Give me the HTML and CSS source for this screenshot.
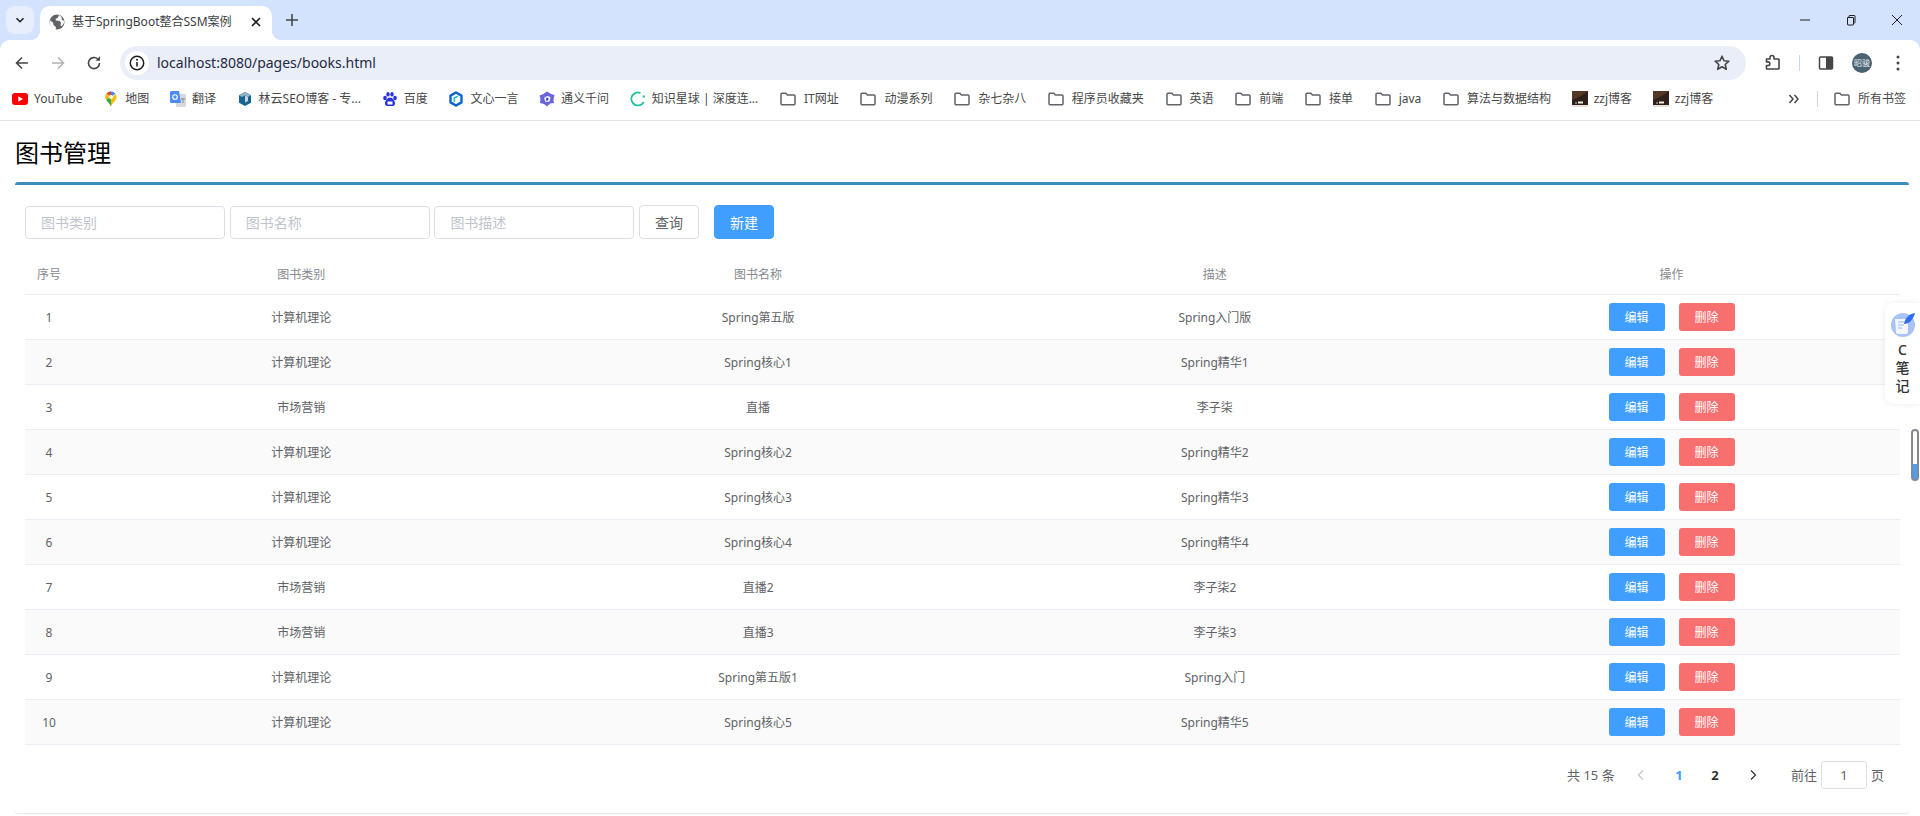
FILE: index.html
```html
<!DOCTYPE html>
<html lang="zh-CN">
<head>
<meta charset="utf-8">
<title>基于SpringBoot整合SSM案例</title>
<link rel="stylesheet" href="styles.css">
</head>
<body>
<svg class="defs" width="0" height="0">
  <symbol id="folder" viewBox="0 0 16 16"><path d="M1 3.200c0-.6.400-1 1-1h3.800l1.700 1.800H14c.6 0 1 .4 1 1v7.800c0 .6-.4 1-1 1H2c-.6 0-1-.4-1-1z" fill="none" stroke="#5f6368" stroke-width="1.500"/></symbol>
  <symbol id="zzj" viewBox="0 0 16 16"><rect width="16" height="16" fill="#2e201a"/><path d="M0 0h16L9 5 0 9z" fill="#553725"/><rect y="14" width="16" height="2" fill="#e8e2da"/><rect x="6" y="10.500" width="5" height="2" fill="#f2ede6"/><rect x="3" y="11.500" width="2" height="1" fill="#cfc8be"/></symbol>
</svg>

<header class="browser">
  <div class="tabstrip">
    <button class="tab-search"><svg width="12" height="12" viewBox="0 0 12 12"><path d="M2.500 4.200 6 7.700l3.500-3.500" fill="none" stroke="#1f1f1f" stroke-width="1.600"/></svg></button>
    <div class="tab">
      <svg width="16" height="16" viewBox="0 0 16 16"><circle cx="8" cy="8" r="7.500" fill="#5f6368"/><path d="M7 15.500 6.800 13 4.500 11 4 8.500 1 6.500 .6 8.500A7.500 7.500 0 0 0 7 15.500zM10 1l-1 2.500L6.500 5 7 6.500l3.500.5 1.500 1.500-.5 3 1 .8A7.500 7.500 0 0 0 15.400 7L13 6l-.5-3z" fill="#fff"/></svg>
      <span class="tab-title">基于SpringBoot整合SSM案例</span>
      <svg class="tab-close" width="12" height="12" viewBox="0 0 12 12"><path d="M2 2l8 8M10 2l-8 8" stroke="#1f1f1f" stroke-width="1.600"/></svg>
    </div>
    <svg class="new-tab" width="14" height="14" viewBox="0 0 14 14"><path d="M7 1v12M1 7h12" stroke="#444746" stroke-width="1.600"/></svg>
    <div class="win-ctrls">
      <svg width="12" height="12" viewBox="0 0 12 12"><path d="M1 6h10" stroke="#1f1f1f"/></svg>
      <svg width="12" height="12" viewBox="0 0 12 12"><path d="M2.500 3.500h5.500a.5.5 0 0 1 .5.5v6.500a.5.5 0 0 1-.5.5H3a.5.5 0 0 1-.5-.5zM4 3.500V2a.5.5 0 0 1 .5-.5H9.500A.5.5 0 0 1 10 2v6.500a.5.5 0 0 1-.5.5h-1" fill="none" stroke="#1f1f1f"/></svg>
      <svg width="12" height="12" viewBox="0 0 12 12"><path d="M1 1l10 10M11 1 1 11" stroke="#1f1f1f"/></svg>
    </div>
  </div>
  <div class="toolbar">
    <div class="nav-btns">
      <svg width="16" height="16" viewBox="0 0 16 16"><path d="M14 8H3M8 2.500 2.500 8 8 13.500" fill="none" stroke="#444746" stroke-width="1.600"/></svg>
      <svg width="16" height="16" viewBox="0 0 16 16"><path d="M2 8h11M8 2.500 13.500 8 8 13.500" fill="none" stroke="#b1b3b5" stroke-width="1.600"/></svg>
      <svg width="16" height="16" viewBox="0 0 16 16"><path d="M13.500 8A5.500 5.500 0 1 1 11.700 4" fill="none" stroke="#444746" stroke-width="1.600"/><path d="M9.500 5.800H14V1.300z" fill="#444746"/></svg>
    </div>
    <div class="omnibox">
      <span class="site-info"><svg width="16" height="16" viewBox="0 0 16 16"><circle cx="8" cy="8" r="6.700" fill="none" stroke="#1f1f1f" stroke-width="1.500"/><path d="M8 7v4.500" stroke="#1f1f1f" stroke-width="1.600"/><circle cx="8" cy="4.800" r="1" fill="#1f1f1f"/></svg></span>
      <span class="url">localhost:8080/pages/books.html</span>
      <svg class="star" width="18" height="18" viewBox="0 0 18 18"><path d="M9 2.200l2 4.500 4.900.5-3.700 3.300 1.100 4.800L9 12.800l-4.300 2.500 1.100-4.800L2.100 7.200 7 6.700z" fill="none" stroke="#444746" stroke-width="1.600" stroke-linejoin="round"/></svg>
    </div>
    <div class="tool-icons">
      <svg class="ic-ext" width="18" height="18" viewBox="0 0 18 18"><path d="M2.500 5h3.500V3.500a2 2 0 0 1 4 0V5h4.500a.5.5 0 0 1 .5.5v9a.5.5 0 0 1-.5.5H2.500v-3.500h1.500a1.800 1.800 0 0 0 0-3.600H2.500z" fill="none" stroke="#444746" stroke-width="1.600" stroke-linejoin="round"/></svg>
      <span class="sep"></span>
      <svg class="ic-side" width="16" height="16" viewBox="0 0 16 16"><rect x="1.500" y="2" width="13" height="12" rx="1" fill="none" stroke="#444746" stroke-width="1.500"/><rect x="8" y="2" width="6.500" height="12" fill="#444746"/></svg>
      <span class="avatar">昭骏</span>
      <svg class="ic-menu" width="4" height="16" viewBox="0 0 4 16"><circle cx="2" cy="2" r="1.500" fill="#444746"/><circle cx="2" cy="8" r="1.500" fill="#444746"/><circle cx="2" cy="14" r="1.500" fill="#444746"/></svg>
    </div>
  </div>
  <nav class="bookmarks">
    <a class="bm"><svg width="16" height="16" viewBox="0 0 16 16"><rect y="2" width="16" height="12" rx="3" fill="#f00"/><path d="M6.300 5.300 11 8l-4.700 2.700z" fill="#fff"/></svg>YouTube</a>
    <a class="bm"><svg width="16" height="16" viewBox="0 0 16 16"><path d="M8 .5a5.500 5.500 0 0 0-5.500 5.500c0 3.700 3.800 5.500 5.500 9.500z" fill="#34a853"/><path d="M8 .5a5.500 5.500 0 0 0-4.300 2L8 6z" fill="#ea4335"/><path d="M3.700 2.500A5.500 5.500 0 0 0 2.500 6c0 1 .3 1.900.7 2.700L8 6z" fill="#fbbc04"/><path d="M8 .5a5.500 5.500 0 0 1 4.400 2.200L8 6z" fill="#4285f4"/><path d="M12.400 2.700A5.500 5.500 0 0 1 13.500 6c0 3.700-3.800 5.500-5.500 9.500V8.500z" fill="#fbbc04"/><circle cx="8" cy="6" r="2" fill="#fff"/></svg>地图</a>
    <a class="bm"><svg width="16" height="16" viewBox="0 0 16 16"><rect x="6" y="3" width="10" height="13" rx="1" fill="#d6d8db"/><path d="M1.500 0H9l2 12H1.500A1.500 1.500 0 0 1 0 10.500v-9A1.500 1.500 0 0 1 1.500 0z" fill="#4c8bf5"/><circle cx="5" cy="6" r="2.300" fill="none" stroke="#fff" stroke-width="1.100"/><path d="M11 8h4M13 7v5" stroke="#8a8d91"/></svg>翻译</a>
    <a class="bm"><svg width="16" height="16" viewBox="0 0 16 16"><path d="M8 1l6 3.200v7.600L8 15l-6-3.200V4.200z" fill="#17648f"/><path d="M8 1l6 3.200-3 1.700-3-1.600-3 1.600-3-1.700z" fill="#8fb6c9"/><path d="M8 4.300l3 1.600v4l-3 1.700z" fill="#c7d3da"/></svg>林云SEO博客 - 专...</a>
    <a class="bm"><svg width="16" height="16" viewBox="0 0 16 16"><g fill="#2932e1"><ellipse cx="3" cy="7" rx="1.800" ry="2.200"/><ellipse cx="6" cy="3.200" rx="1.700" ry="2.200"/><ellipse cx="10" cy="3.200" rx="1.700" ry="2.200"/><ellipse cx="13" cy="7" rx="1.800" ry="2.200"/><path d="M8 6.500c2.500 0 5 3.500 5 6 0 2-1.500 2.500-3 2.500H6c-1.500 0-3-.5-3-2.500 0-2.500 2.500-6 5-6z"/></g><rect x="5.500" y="10.500" width="5" height="3" fill="#fff"/></svg>百度</a>
    <a class="bm"><svg width="16" height="16" viewBox="0 0 16 16"><path d="M8 1.500l5.500 3.100v6.800L8 14.500l-5.500-3.100V4.600z" fill="none" stroke="#0a62d0" stroke-width="2.400" stroke-linejoin="round"/><path d="M6.300 11V6.800L10 5.300" fill="none" stroke="#23c3ce" stroke-width="1.600"/></svg>文心一言</a>
    <a class="bm"><svg width="16" height="16" viewBox="0 0 16 16"><path d="M8 .5 12 3l3.500 1-1 4.500L15 12l-4 .5L8 15.500 5 13l-4-1 .5-4L.5 4.500 4.500 3z" fill="#6a64dd"/><path d="M8 5l3.500 1-1 4.500-4 .5-1.500-4z" fill="#fff"/><path d="M7.500 6.500 9.500 7 9 9.500 7 9.800z" fill="#3c35a6"/></svg>通义千问</a>
    <a class="bm"><svg width="16" height="16" viewBox="0 0 16 16"><path d="M13.700 10.800A6.500 6.500 0 1 1 10.500 2" fill="none" stroke="#21c2a0" stroke-width="1.800"/><circle cx="13.800" cy="5.400" r="1.200" fill="#21c2a0"/></svg>知识星球 | 深度连...</a>
    <a class="bm bm-folder"><svg width="16" height="16"><use href="#folder"/></svg>IT网址</a>
    <a class="bm bm-folder"><svg width="16" height="16"><use href="#folder"/></svg>动漫系列</a>
    <a class="bm bm-folder"><svg width="16" height="16"><use href="#folder"/></svg>杂七杂八</a>
    <a class="bm bm-folder"><svg width="16" height="16"><use href="#folder"/></svg>程序员收藏夹</a>
    <a class="bm bm-folder"><svg width="16" height="16"><use href="#folder"/></svg>英语</a>
    <a class="bm bm-folder"><svg width="16" height="16"><use href="#folder"/></svg>前端</a>
    <a class="bm bm-folder"><svg width="16" height="16"><use href="#folder"/></svg>接单</a>
    <a class="bm bm-folder"><svg width="16" height="16"><use href="#folder"/></svg>java</a>
    <a class="bm bm-folder"><svg width="16" height="16"><use href="#folder"/></svg>算法与数据结构</a>
    <a class="bm"><svg width="16" height="16"><use href="#zzj"/></svg>zzj博客</a>
    <a class="bm"><svg width="16" height="16"><use href="#zzj"/></svg>zzj博客</a>
    <div class="bm-end">
      <svg width="12" height="12" viewBox="0 0 12 12"><path d="M1.500 2 5 6l-3.500 4M6.500 2 10 6l-3.500 4" fill="none" stroke="#444746" stroke-width="1.500"/></svg>
      <span class="sep"></span>
      <a class="bm bm-last"><svg width="16" height="16"><use href="#folder"/></svg>所有书签</a>
    </div>
  </nav>
</header>

<main class="page">
  <h1 class="page-title">图书管理</h1>
  <section class="box">
    <div class="filters">
      <input class="field" placeholder="图书类别">
      <input class="field" placeholder="图书名称">
      <input class="field" placeholder="图书描述">
      <button class="btn">查询</button>
      <button class="btn btn-primary">新建</button>
    </div>
    <table class="grid">
      <thead>
        <tr><th class="col-no">序号</th><th>图书类别</th><th>图书名称</th><th>描述</th><th>操作</th></tr>
      </thead>
      <tbody>
        <tr><td>1</td><td>计算机理论</td><td>Spring第五版</td><td>Spring入门版</td><td><button class="mini edit">编辑</button><button class="mini del">删除</button></td></tr>
        <tr><td>2</td><td>计算机理论</td><td>Spring核心1</td><td>Spring精华1</td><td><button class="mini edit">编辑</button><button class="mini del">删除</button></td></tr>
        <tr><td>3</td><td>市场营销</td><td>直播</td><td>李子柒</td><td><button class="mini edit">编辑</button><button class="mini del">删除</button></td></tr>
        <tr><td>4</td><td>计算机理论</td><td>Spring核心2</td><td>Spring精华2</td><td><button class="mini edit">编辑</button><button class="mini del">删除</button></td></tr>
        <tr><td>5</td><td>计算机理论</td><td>Spring核心3</td><td>Spring精华3</td><td><button class="mini edit">编辑</button><button class="mini del">删除</button></td></tr>
        <tr><td>6</td><td>计算机理论</td><td>Spring核心4</td><td>Spring精华4</td><td><button class="mini edit">编辑</button><button class="mini del">删除</button></td></tr>
        <tr><td>7</td><td>市场营销</td><td>直播2</td><td>李子柒2</td><td><button class="mini edit">编辑</button><button class="mini del">删除</button></td></tr>
        <tr><td>8</td><td>市场营销</td><td>直播3</td><td>李子柒3</td><td><button class="mini edit">编辑</button><button class="mini del">删除</button></td></tr>
        <tr><td>9</td><td>计算机理论</td><td>Spring第五版1</td><td>Spring入门</td><td><button class="mini edit">编辑</button><button class="mini del">删除</button></td></tr>
        <tr><td>10</td><td>计算机理论</td><td>Spring核心5</td><td>Spring精华5</td><td><button class="mini edit">编辑</button><button class="mini del">删除</button></td></tr>
      </tbody>
    </table>
    <div class="pager">
      <span class="total">共 15 条</span>
      <svg class="arrow" width="12" height="12" viewBox="0 0 12 12"><path d="M8 1.500 3.500 6 8 10.500" fill="none" stroke="#c0c4cc" stroke-width="1.200"/></svg>
      <span class="pg pg-active">1</span>
      <span class="pg">2</span>
      <svg class="arrow" width="12" height="12" viewBox="0 0 12 12"><path d="M4 1.500 8.500 6 4 10.500" fill="none" stroke="#303133" stroke-width="1.200"/></svg>
      <span class="jump">前往<input class="jump-input" value="1">页</span>
    </div>
  </section>
</main>

<aside class="note-widget">
  <svg width="26" height="26" viewBox="0 0 26 26"><circle cx="13" cy="13" r="12" fill="#a9c2f7"/><path d="M5 7h13v13a2 2 0 0 1-2 2H8a2 2 0 0 1-2-2z" fill="#f3f6ff"/><path d="M8 10h6M8 13h6M8 16h4" stroke="#9db6ec"/><path d="M25 1c-6 1-10 5-11 11 5 0 9-4 11-11z" fill="#2f6df2"/></svg>
  <span class="note-text">C<br>笔<br>记</span>
</aside>
<div class="mini-scroll"><span class="mini-thumb"></span></div>
</body>
</html>
```

FILE: styles.css
```css
* { box-sizing: border-box; }
html, body { margin: 0; height: 816px; overflow: hidden; background: #fff; }
body { font-family: "Noto Sans", "Noto Sans CJK SC", sans-serif; font-size: 12px; color: #444; position: relative; }
.defs { position: absolute; }
svg { display: block; flex: none; }

/* browser chrome */
.browser { background: #d3e3fd; }
.tabstrip { height: 40px; display: flex; align-items: flex-start; padding: 6px 0 0 6px; }
.tab-search { width: 28px; height: 28px; border: 0; border-radius: 9px; background: #e7effc; display: flex; align-items: center; justify-content: center; padding: 0; }
.tab { position: relative; margin-left: 6px; width: 232px; height: 34px; background: #fff; border-radius: 10px 10px 0 0; display: flex; align-items: center; padding: 0 10px 2px 9px; color: #1f1f1f; }
.tab::before, .tab::after { content: ""; position: absolute; bottom: 0; width: 10px; height: 10px; }
.tab::before { left: -10px; background: radial-gradient(circle at 0 0, transparent 10px, #fff 10.5px); }
.tab::after { right: -10px; background: radial-gradient(circle at 100% 0, transparent 10px, #fff 10.5px); }
.tab-title { margin-left: 7px; line-height: 16px; white-space: nowrap; color: #3c4043; }
.tab-close { margin-left: auto; }
.new-tab { margin: 7px 0 0 13px; }
.win-ctrls { margin-left: auto; display: flex; gap: 34px; padding: 8px 17px 0 0; }

.toolbar { height: 40px; background: #fff; border-radius: 10px 10px 0 0; display: flex; padding-top: 6px; }
.nav-btns { display: flex; gap: 20px; width: 120px; padding: 9px 0 0 14px; }
.omnibox { width: 1626px; height: 34px; border-radius: 17px; background: #eaeef8; display: flex; align-items: center; padding-left: 5px; }
.site-info { width: 24px; height: 24px; border-radius: 50%; background: #fff; display: flex; align-items: center; justify-content: center; }
.url { margin-left: 8px; font-size: 14px; line-height: 20px; color: #1f2a44; }
.star { margin-left: auto; margin-right: 15px; }
.tool-icons { flex: 1; height: 34px; display: flex; align-items: center; }
.ic-ext { margin-left: 18px; }
.sep { width: 1px; height: 16px; background: #c7d7f3; }
.tool-icons .sep { margin-left: 17px; }
.ic-side { margin-left: 18px; }
.avatar { margin-left: 18px; width: 20px; height: 20px; border-radius: 50%; background: #4a6372; color: #e8eef2; font-size: 8px; line-height: 20px; text-align: center; white-space: nowrap; }
.ic-menu { margin-left: 24px; }

.bookmarks { height: 41px; background: #fff; border-bottom: 1px solid #e1e3e6; display: flex; align-items: center; gap: 20.7px; padding: 0 14px 2px 12px; }
.bm { display: flex; align-items: center; gap: 6px; line-height: 16px; white-space: nowrap; color: #474747; }
.bm-folder { gap: 8px; margin-left: 1px; }
.bm-last { gap: 8px; }
.bm-end { margin-left: auto; display: flex; align-items: center; }
.bm-end .sep { margin: 0 16px 0 17px; }

/* page */
.page { padding-left: 15px; width: 1909px; }
.page-title { margin: 0; height: 61px; padding-top: 16px; font-size: 24px; line-height: 32px; font-weight: 400; color: #000; }
.box { height: 631px; border-top: 3px solid #3c8dbc; border-radius: 3px; box-shadow: 0 1px 1px rgba(0,0,0,.1); padding: 20px 9px 0 10px; }
.filters { display: flex; align-items: center; height: 34px; }
.field { width: 200px; height: 33px; margin-right: 4.700px; border: 1px solid #dcdfe6; border-radius: 4px; padding: 0 15px; font: 14px "Noto Sans", "Noto Sans CJK SC", sans-serif; color: #606266; outline: 0; background: #fff; }
.field::placeholder { color: #c0c4cc; opacity: 1; }
.btn { width: 60px; height: 34px; border: 1px solid #dcdfe6; border-radius: 4px; background: #fff; color: #606266; font: 14px "Noto Sans", "Noto Sans CJK SC", sans-serif; padding: 0; }
.btn-primary { margin-left: 15px; background: #409eff; border-color: #409eff; color: #fff; }

.grid { width: 100%; margin-top: 14px; border-collapse: collapse; table-layout: fixed; }
.grid th { height: 41px; padding-top: 5px; font-weight: 400; color: #86898f; text-align: center; border-bottom: 1px solid #ebeef5; line-height: 16px; }
.grid .col-no { width: 48px; }
.grid td { height: 45px; text-align: center; color: #606266; border-bottom: 1px solid #ebeef5; line-height: 16px; padding: 2px 0 0; }
.grid tbody tr:nth-child(even) td { background: #fafafa; }
.mini { width: 56px; height: 28px; border: 0; border-radius: 3px; color: #fff; font: 12px "Noto Sans", "Noto Sans CJK SC", sans-serif; padding: 0; vertical-align: middle; margin-top: -2px; }
.edit { background: #409eff; }
.del { background: #f76f6f; margin-left: 14px; }

.pager { display: flex; align-items: center; margin-top: 16px; height: 28px; font-size: 13px; color: #606266; padding-left: 1542px; }
.total { width: 50px; white-space: nowrap; }
.arrow { margin-left: 18px; }
.pg { width: 36px; text-align: center; font-weight: 700; color: #303133; }
.pg-active { color: #409eff; }
.arrow + .pg { margin-left: 14px; }
.pg + .arrow { margin-left: 14px; }
.jump { margin-left: 32px; display: flex; align-items: center; white-space: nowrap; }
.jump-input { width: 46px; height: 28px; margin: 0 4px; border: 1px solid #dcdfe6; border-radius: 3px; text-align: center; font: 13px "Noto Sans", "Noto Sans CJK SC", sans-serif; color: #606266; padding: 0; background: #fff; outline: 0; }

/* overlays */
.note-widget { position: absolute; left: 1885px; top: 303px; width: 35px; height: 101px; background: #fff; border-radius: 8px 0 0 8px; box-shadow: 0 0 6px rgba(0,0,0,.08); display: flex; flex-direction: column; align-items: center; padding-top: 9px; }
.note-text { font-size: 14px; font-weight: 500; line-height: 18px; color: #333; text-align: center; margin-top: 3px; }
.mini-scroll { position: absolute; left: 1911px; top: 429px; width: 8px; height: 52px; border: 2px solid #85888c; border-radius: 4px; background: #fff; display: flex; align-items: flex-end; }
.mini-thumb { width: 100%; height: 15px; background: #4a9eff; }
```
